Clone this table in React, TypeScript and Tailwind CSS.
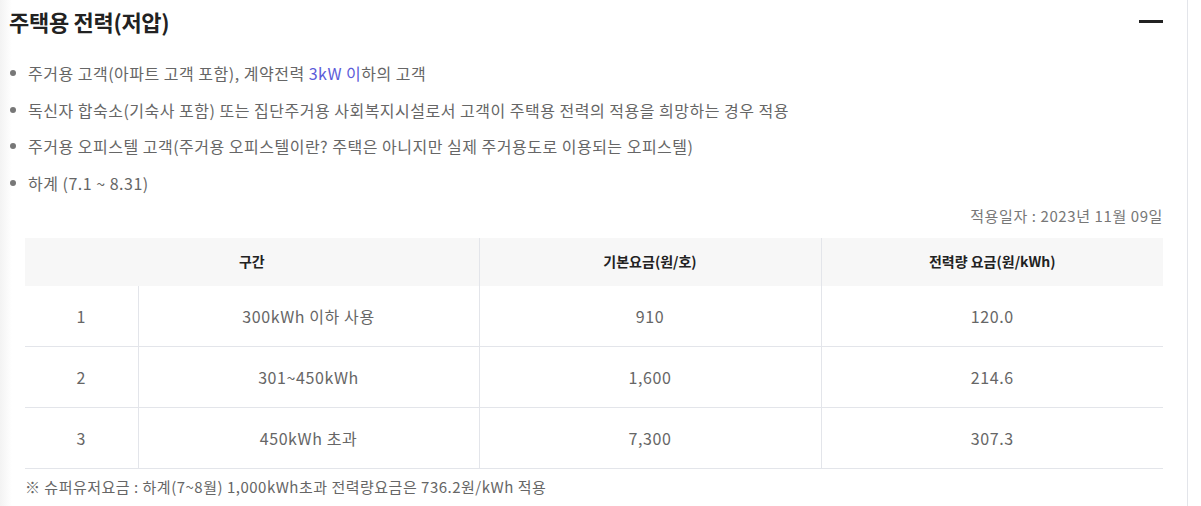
import React from 'react';

const rows = [
  { no: '1', range: '300kWh 이하 사용', base: '910', rate: '120.0' },
  { no: '2', range: '301~450kWh', base: '1,600', rate: '214.6' },
  { no: '3', range: '450kWh 초과', base: '7,300', rate: '307.3' },
];

export default function App() {
  return (
    <div
      className="flex min-h-[506px] w-[1201px] bg-white text-[#666]"
      style={{ fontFamily: '"Noto Sans CJK KR", "Noto Sans", sans-serif' }}
    >
      <div className="flex w-[1188px] border-r border-[#e3e5ea] bg-gradient-to-r from-[#f3f3f3] from-0% via-white via-1% to-white">
        <div className="flex w-full flex-col pl-[9px] pr-[24px]">
          {/* Header */}
          <div className="flex h-[42px] items-center justify-between">
            <h2 className="text-[22px] font-bold leading-none tracking-[-0.3px] text-[#222]">주택용 전력(저압)</h2>
            <span className="mt-[1px] block h-[3px] w-[24px] bg-[#222]"></span>
          </div>

          {/* Bullet list */}
          <ul className="mt-[19px] flex flex-col gap-[12.5px] text-[16px] leading-[24px] tracking-[0.5px]">
            <li className="flex items-center">
              <span className="ml-[1px] mr-[12px] h-[6px] w-[6px] rounded-full bg-[#777]"></span>
              <span>
                주거용 고객(아파트 고객 포함), 계약전력 <span className="text-[#5b5bd9]">3kW 이</span>하의 고객
              </span>
            </li>
            <li className="flex items-center">
              <span className="ml-[1px] mr-[12px] h-[6px] w-[6px] rounded-full bg-[#777]"></span>
              <span>독신자 합숙소(기숙사 포함) 또는 집단주거용 사회복지시설로서 고객이 주택용 전력의 적용을 희망하는 경우 적용</span>
            </li>
            <li className="flex items-center">
              <span className="ml-[1px] mr-[12px] h-[6px] w-[6px] rounded-full bg-[#777]"></span>
              <span>주거용 오피스텔 고객(주거용 오피스텔이란? 주택은 아니지만 실제 주거용도로 이용되는 오피스텔)</span>
            </li>
            <li className="flex items-center">
              <span className="ml-[1px] mr-[12px] h-[6px] w-[6px] rounded-full bg-[#777]"></span>
              <span>하계 (7.1 ~ 8.31)</span>
            </li>
          </ul>

          {/* Date */}
          <p className="mt-[11px] text-right text-[15px] leading-[20px] tracking-[0.6px] text-[#777]">
            적용일자 : 2023년 11월 09일
          </p>

          {/* Table */}
          <table className="ml-[16px] mt-[12px] w-[1138px] table-fixed border-collapse text-center">
            <colgroup>
              <col className="w-[113px]" />
              <col className="w-[341px]" />
              <col className="w-[342px]" />
              <col />
            </colgroup>
            <thead>
              <tr className="h-[48px] bg-[#f7f7f7] text-[14px] font-bold text-[#222]">
                <th colSpan={2} className="border-r border-[#e3e5ea] font-bold">구간</th>
                <th className="border-r border-[#e3e5ea] font-bold">기본요금(원/호)</th>
                <th className="font-bold">전력량 요금(원/kWh)</th>
              </tr>
            </thead>
            <tbody className="text-[16px] tracking-[0.6px]">
              {rows.map((r) => (
                <tr key={r.no} className="h-[61px] border-b border-[#e3e5ea]">
                  <td className="border-r border-[#e3e5ea]">{r.no}</td>
                  <td className="border-r border-[#e3e5ea]">{r.range}</td>
                  <td className="border-r border-[#e3e5ea]">{r.base}</td>
                  <td>{r.rate}</td>
                </tr>
              ))}
            </tbody>
          </table>

          <p className="ml-[16px] mt-[8px] text-[15px] leading-[20px] tracking-[0.5px] text-[#666]">
            ※ 슈퍼유저요금 : 하계(7~8월) 1,000kWh초과 전력량요금은 736.2원/kWh 적용
          </p>
        </div>
      </div>
    </div>
  );
}
